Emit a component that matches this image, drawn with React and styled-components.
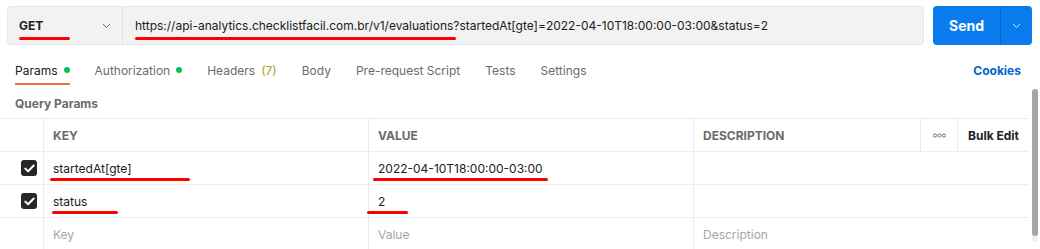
import React from "react";
import styled, { createGlobalStyle } from "styled-components";

const Global = createGlobalStyle`
  html, body { margin: 0; padding: 0; background: #fff; }
  body { font-family: Inter, "Noto Sans", "Liberation Sans", sans-serif; color: #212121; }
  * { box-sizing: border-box; }
`;

const Page = styled.div`
  width: 1040px;
  height: 249px;
  overflow: hidden;
  background: #fff;
`;

const RequestBar = styled.div`
  display: flex;
  gap: 9px;
  padding: 6px 8px 0 7px;
  height: 45px;
`;

const UrlGroup = styled.div`
  flex: 1;
  display: flex;
  background: #f2f2f2;
  border: 1px solid #e6e6e6;
  border-radius: 4px;
`;

const Method = styled.div`
  width: 115px;
  display: flex;
  align-items: center;
  justify-content: space-between;
  padding: 0 11px 0 11px;
  border-right: 1px solid #e3e3e3;
  font-size: 12px;
  font-weight: 700;
  color: #212121;
`;

const UrlText = styled.div`
  flex: 1;
  display: flex;
  align-items: center;
  padding-left: 12px;
  font-size: 12px;
  color: #212121;
  white-space: nowrap;
`;

const Mark = styled.span`
  position: relative;
  display: inline-block;
  &::after {
    content: "";
    position: absolute;
    left: ${(p) => p.$l}px;
    width: ${(p) => p.$w}px;
    top: calc(100% + ${(p) => p.$t ?? 3}px);
    height: 3px;
    border-radius: 2px;
    background: #f00;
  }
`;

const SendButton = styled.div`
  width: 99px;
  display: flex;
  background: #097bed;
  border-radius: 4px;
  color: #fff;
`;

const SendLabel = styled.div`
  flex: 1;
  display: flex;
  align-items: center;
  justify-content: center;
  font-size: 14px;
  font-weight: 700;
  border-right: 1px solid #0868c9;
`;

const SendArrow = styled.div`
  width: 31px;
  display: flex;
  align-items: center;
  justify-content: center;
`;

const Tabs = styled.div`
  display: flex;
  align-items: stretch;
  height: 30px;
  margin-top: 10px;
  padding: 0 19px 0 2.5px;
`;

const Tab = styled.div`
  position: relative;
  display: flex;
  align-items: center;
  gap: 6px;
  padding: 0 12.5px;
  font-size: 12px;
  color: ${(p) => (p.$active ? "#212121" : "#6b6b6b")};
  &::after {
    content: "";
    display: ${(p) => (p.$active ? "block" : "none")};
    position: absolute;
    left: 12.5px;
    right: 12.5px;
    bottom: 0;
    height: 2px;
    background: #f26b3a;
  }
`;

const Dot = styled.span`
  width: 6px;
  height: 6px;
  border-radius: 50%;
  background: #0cbb52;
`;

const Count = styled.span`
  color: #b59a24;
`;

const Spacer = styled.div`
  flex: 1;
`;

const Cookies = styled.div`
  display: flex;
  align-items: center;
  font-size: 12px;
  font-weight: 700;
  color: #0265d2;
`;

const Body = styled.div`
  display: flex;
  align-items: flex-start;
  gap: 3px;
  padding-top: 4px;
`;

const Content = styled.div`
  width: 1029px;
`;

const SectionTitle = styled.div`
  height: 29px;
  display: flex;
  align-items: center;
  padding-left: 15px;
  font-size: 12px;
  font-weight: 700;
  color: #6b6b6b;
`;

const Table = styled.div`
  border-top: 1px solid #ededed;
`;

const Row = styled.div`
  display: grid;
  grid-template-columns: 43px 325px 325px ${(p) => (p.$head ? "227px 37px 1fr" : "1fr")};
  height: 33px;
  border-bottom: 1px solid #ededed;
`;

const Cell = styled.div`
  display: flex;
  align-items: center;
  padding: 0 ${(p) => (p.$center ? "0" : "9px")};
  justify-content: ${(p) => (p.$center ? "center" : "flex-start")};
  border-left: 1px solid #ededed;
  font-size: 12px;
  color: #212121;
  white-space: nowrap;
`;

const HeadCell = styled(Cell)`
  font-weight: 700;
  color: #6b6b6b;
`;

const BulkCell = styled(Cell)`
  font-weight: 700;
  color: #212121;
  justify-content: center;
  padding: 0;
`;

const CheckCell = styled.div`
  display: flex;
  align-items: center;
  justify-content: flex-end;
  padding-right: 6px;
`;

const Check = styled.div`
  width: 16px;
  height: 16px;
  border-radius: 3px;
  background: #262626;
  display: flex;
  align-items: center;
  justify-content: center;
`;

const Placeholder = styled.span`
  color: #a6a6a6;
`;

const ScrollTrack = styled.div`
  width: 6px;
  height: 153px;
  border-radius: 3px;
  background: #f0f0f0;
  display: flex;
  align-items: flex-start;
`;

const ScrollThumb = styled.div`
  width: 6px;
  height: 147px;
  border-radius: 3px;
  background: #a6a6a6;
`;

const Chevron = ({ color = "#6b6b6b" }) => (
  <svg width="9" height="6" viewBox="0 0 9 6" fill="none">
    <path d="M1 1l3.5 3.5L8 1" stroke={color} strokeWidth="1" />
  </svg>
);

const Tick = () => (
  <svg width="11" height="9" viewBox="0 0 11 9" fill="none">
    <path d="M1.3 4.6l2.8 2.7L9.7 1.5" stroke="#fff" strokeWidth="2" strokeLinecap="round" strokeLinejoin="round" />
  </svg>
);

const Dots = () => (
  <svg width="13" height="5" viewBox="0 0 13 5" fill="none">
    <circle cx="2" cy="2.5" r="1.6" stroke="#6b6b6b" strokeWidth="0.9" />
    <circle cx="6.5" cy="2.5" r="1.6" stroke="#6b6b6b" strokeWidth="0.9" />
    <circle cx="11" cy="2.5" r="1.6" stroke="#6b6b6b" strokeWidth="0.9" />
  </svg>
);

const params = [
  { key: "startedAt[gte]", value: "2022-04-10T18:00:00-03:00", km: [-3, 140], vm: [-5, 175] },
  { key: "status", value: "2", km: [-1, 66], vm: [-11, 41] },
];

export default function App() {
  return (
    <Page>
      <Global />
      <RequestBar>
        <UrlGroup>
          <Method>
            <Mark $l={0} $w={51} $t={4}>GET</Mark>
            <Chevron />
          </Method>
          <UrlText>
            <Mark $l={0} $w={321} $t={4}>
              https://api-analytics.checklistfacil.com.br/v1/evaluations?startedAt[gte]=2022-04-10T18:00:00-03:00&amp;status=2
            </Mark>
          </UrlText>
        </UrlGroup>
        <SendButton>
          <SendLabel>Send</SendLabel>
          <SendArrow>
            <Chevron color="#cfe4fb" />
          </SendArrow>
        </SendButton>
      </RequestBar>
      <Tabs>
        <Tab $active>
          Params <Dot />
        </Tab>
        <Tab>
          Authorization <Dot />
        </Tab>
        <Tab>
          Headers <Count>(7)</Count>
        </Tab>
        <Tab>Body</Tab>
        <Tab>Pre-request Script</Tab>
        <Tab>Tests</Tab>
        <Tab>Settings</Tab>
        <Spacer />
        <Cookies>Cookies</Cookies>
      </Tabs>
      <Body>
        <Content>
          <SectionTitle>Query Params</SectionTitle>
          <Table>
            <Row $head>
              <CheckCell />
              <HeadCell>KEY</HeadCell>
              <HeadCell>VALUE</HeadCell>
              <HeadCell>DESCRIPTION</HeadCell>
              <HeadCell $center>
                <Dots />
              </HeadCell>
              <BulkCell>Bulk Edit</BulkCell>
            </Row>
            {params.map((p) => (
              <Row key={p.key}>
                <CheckCell>
                  <Check>
                    <Tick />
                  </Check>
                </CheckCell>
                <Cell>
                  <Mark $l={p.km[0]} $w={p.km[1]} $t={2}>{p.key}</Mark>
                </Cell>
                <Cell>
                  <Mark $l={p.vm[0]} $w={p.vm[1]} $t={2}>{p.value}</Mark>
                </Cell>
                <Cell />
              </Row>
            ))}
            <Row>
              <CheckCell />
              <Cell>
                <Placeholder>Key</Placeholder>
              </Cell>
              <Cell>
                <Placeholder>Value</Placeholder>
              </Cell>
              <Cell>
                <Placeholder>Description</Placeholder>
              </Cell>
            </Row>
          </Table>
        </Content>
        <ScrollTrack>
          <ScrollThumb />
        </ScrollTrack>
      </Body>
    </Page>
  );
}
